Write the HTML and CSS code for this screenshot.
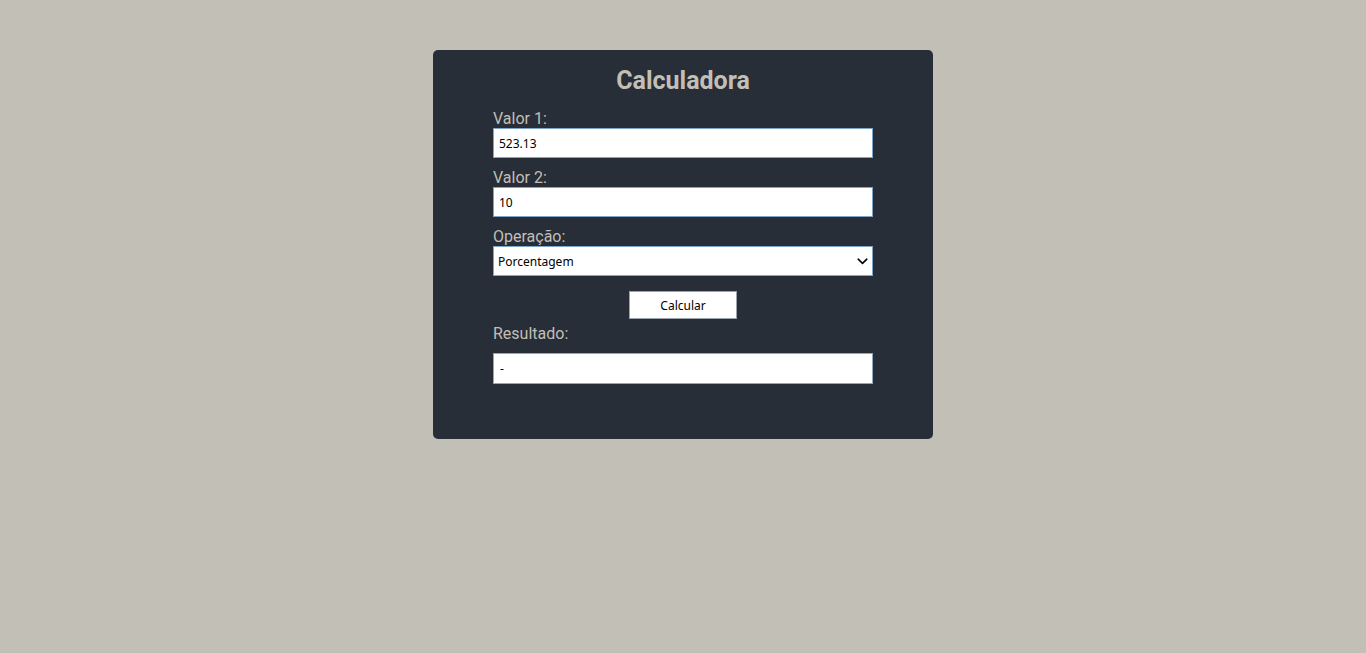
FILE: index.html
```html
<!DOCTYPE html>
<html lang="pt">
<head>
<meta charset="utf-8">
<title>Calculadora</title>
<link rel="stylesheet" href="styles.css">
</head>
<body>
<div class="card">
  <h1 class="title">Calculadora</h1>
  <label class="label" for="v1">Valor 1:</label>
  <input class="field" id="v1" type="text" value="523.13">
  <label class="label" for="v2">Valor 2:</label>
  <input class="field" id="v2" type="text" value="10">
  <label class="label" for="op">Operação:</label>
  <div class="select-wrap">
    <select class="field select" id="op">
      <option>Porcentagem</option>
    </select>
    <svg class="chevron" width="11" height="7" viewBox="0 0 11 7" aria-hidden="true">
      <path d="M1.2 1.2 L5.5 5.3 L9.8 1.2" fill="none" stroke="#000" stroke-width="1.6" stroke-linecap="round" stroke-linejoin="round"/>
    </svg>
  </div>
  <div class="actions"><button class="btn" type="button">Calcular</button></div>
  <div class="label">Resultado:</div>
  <div class="result">-</div>
</div>
</body>
</html>
```
FILE: styles.css
```css
html, body {
  margin: 0;
  padding: 0;
}
body {
  background: #c2bfb7;
  font-family: Roboto, "Liberation Sans", sans-serif;
  padding-top: 50px;
}
.card {
  width: 500px;
  box-sizing: border-box;
  margin: 0 auto;
  background: #282e37;
  border-radius: 5px;
  padding: 16px 60px 55px;
  display: flex;
  flex-direction: column;
}
.title {
  margin: 0 0 14px;
  text-align: center;
  font-size: 25px;
  line-height: 29px;
  font-weight: 700;
  color: #c2bfb7;
}
.label {
  display: block;
  font-size: 16px;
  line-height: 19px;
  color: #c2bfb7;
}
.field {
  box-sizing: border-box;
  width: 380px;
  height: 30px;
  margin: 0 0 10px;
  padding: 0 5px;
  border: 1px solid #7fa6c9;
  background: #fff;
  font-family: "Noto Sans", "Open Sans", sans-serif;
  font-size: 12px;
  color: #000;
  outline: none;
  border-radius: 0;
}
.select-wrap {
  position: relative;
  margin-bottom: 15px;
}
.select {
  display: block;
  appearance: none;
  -webkit-appearance: none;
  padding: 0 4px;
  margin: 0;
}
.chevron {
  position: absolute;
  left: 364px;
  top: 12px;
  pointer-events: none;
}
.actions {
  display: flex;
  justify-content: center;
  margin-bottom: 5px;
}
.btn {
  width: 108px;
  height: 28px;
  background: #fff;
  border: 1px solid #9aa3ad;
  font-family: "Noto Sans", "Open Sans", sans-serif;
  font-size: 12px;
  color: #000;
  padding: 0;
}
.result {
  box-sizing: border-box;
  margin-top: 10px;
  height: 31px;
  border: 1px solid #8ea8bf;
  background: #fff;
  padding: 0 6px;
  font-family: "Noto Sans", "Open Sans", sans-serif;
  font-size: 12px;
  line-height: 29px;
  color: #000;
}
```
